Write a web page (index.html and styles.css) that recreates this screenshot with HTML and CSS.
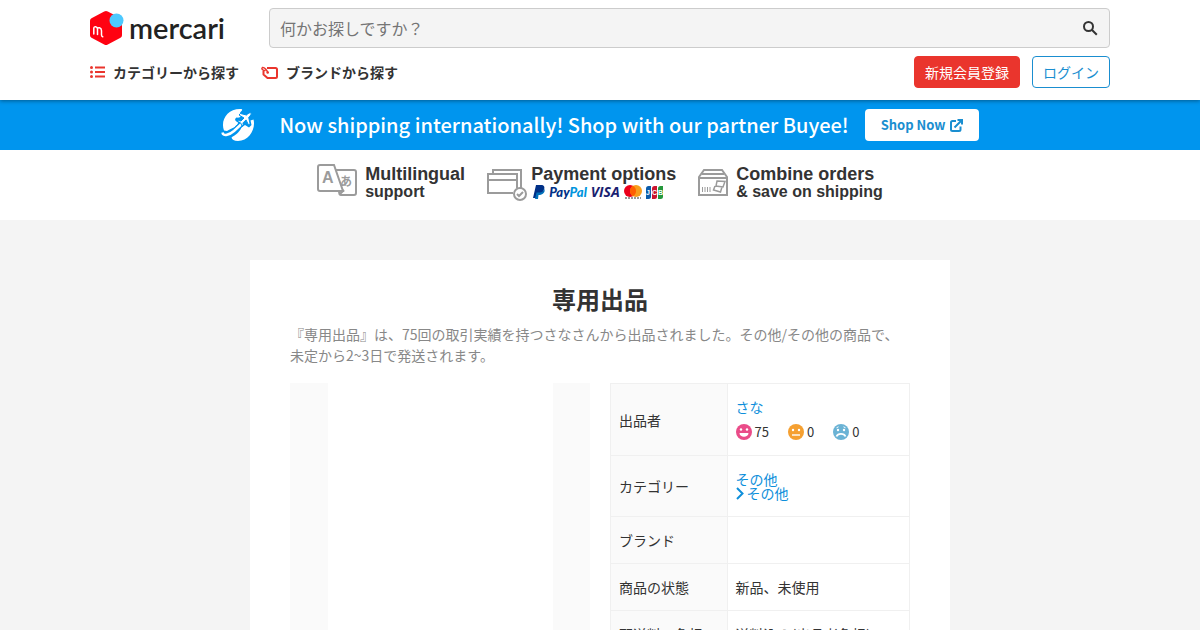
FILE: index.html
```html
<!DOCTYPE html>
<html lang="ja">
<head>
    <meta charset="utf-8">
    <meta name="viewport" content="width=device-width, initial-scale=1">
    <title>専用出品 - メルカリ</title>
    <link rel="stylesheet" href="styles.css">
</head>
<body>
    <header class="header">
        <div class="header-inner">
            <div class="header-top">
                <a href="#" class="logo">
                    <svg width="35" height="34" viewBox="0 0 35 34">
                        <path d="M14.200.5Q16 -.5 17.800.5L30.500 7.200Q32 8 32 9.800V24.200Q32 26 30.500 26.800L17.800 33.500Q16 34.500 14.200 33.500L1.500 26.800Q0 26 0 24.200V9.800Q0 8 1.500 7.200Z" fill="#ff0211"/>
                        <circle cx="26.500" cy="9.500" r="7" fill="#4dc9ff"/>
                        <path d="M3.800 23v-5.500c0-2.800 3.700-2.200 3.700.8v5.200M7.500 18.300c0-2.800 4-1.800 4 1.400v4.200c0 1 .3 1.500 1.200 1.800" fill="none" stroke="#fff" stroke-width="1.500" stroke-linecap="round"/>
                    </svg>
                    <span class="logo-name">mercari</span>
                </a>
                <form class="search" action="#">
                    <input type="search" name="keyword" class="search-input" aria-label="キーワード" placeholder="何かお探しですか？">
                    <button type="submit" class="search-button" aria-label="検索">
                        <svg width="16" height="16" viewBox="0 0 16 16" fill="none" stroke="#333" stroke-width="2">
                            <circle cx="6.500" cy="6.500" r="4.500"/>
                            <path d="M9.800 9.800l5 5"/>
                        </svg>
                    </button>
                </form>
            </div>
            <div class="header-bottom">
                <nav class="nav">
                    <a href="#" class="nav-link nav-category">
                        <svg width="15" height="12" viewBox="0 0 15 12" fill="#ea352d">
                            <circle cx="1.500" cy="1.500" r="1.500"/>
                            <circle cx="1.500" cy="6" r="1.500"/>
                            <circle cx="1.500" cy="10.500" r="1.500"/>
                            <path d="M5 .5h10v2H5zM5 5h10v2H5zM5 9.500h10v2H5z"/>
                        </svg>
                        カテゴリーから探す
                    </a>
                    <a href="#" class="nav-link">
                        <svg width="17" height="13" viewBox="0 0 17 13" fill="none" stroke="#ea352d" stroke-width="2" stroke-linejoin="round">
                            <path d="M6 2H14.500Q16 2 16 3.500V10.500Q16 12 14.500 12H6.500L2.500 8.500V5"/>
                            <path d="M7 7C6 4 3.500 1.200 1.500 1.500C0 2.500 1.500 4.500 4.500 4.600" stroke-width="1.500"/>
                            <circle cx="6.700" cy="6.500" r="1.300" fill="#ea352d" stroke="none"/>
                        </svg>
                        ブランドから探す
                    </a>
                </nav>
                <div class="user-buttons">
                    <a href="#" class="btn btn-red">新規会員登録</a>
                    <a href="#" class="btn btn-outline">ログイン</a>
                </div>
            </div>
        </div>
    </header>

    <section class="banner">
        <svg width="34" height="34" viewBox="0 0 34 34">
            <path d="M3 22.500C-1 12 7 0 21 1.200C22 3 18 4 19 6.500C21 9 18 10 15.500 9.500C13 11 14 13 17 14.500C17 17 15 17 14 19C11 20 8 22 6 23Z" fill="#fff"/>
            <path d="M10.500 29.500C14 27 18 25 20.500 19.500L24 17L28 19.500L30.500 17L29.500 12.500L32.500 11.500C35 21 28 33 17 33C13 33 11 31.500 10.500 29.500Z" fill="#fff"/>
            <path d="M1.500 24.500C3 29 9 26.500 13 23L20.500 16" fill="none" stroke="#0095ee" stroke-width="5"/>
            <path d="M1.500 24.500C2 29 9 26.500 13 23L20.500 16" fill="none" stroke="#fff" stroke-width="2.500"/>
            <path d="M30 5c-1-1-3 .5-4.500 2l-6-1.500-1.500 1.500 5 3-3 3-2.200-.4-1 1 3 1.500 1.200 3 1.200-1-.2-2.200 3-3 2.500 5 1.500-1.500-1.300-6c1.500-1.500 3.300-3.400 2.300-4.400z" fill="#fff" stroke="#0095ee"/>
        </svg>
        <p class="banner-text">Now shipping internationally! Shop with our partner Buyee!</p>
        <a href="#" class="banner-button">Shop Now
            <svg width="13" height="13" viewBox="0 0 13 13" fill="none" stroke="#1a8ed0" stroke-width="2">
                <path d="M6 2H2.500Q1 2 1 3.500V10.500Q1 12 2.500 12H9Q10.500 12 10.500 10.500V7.500"/>
                <path d="M4.500 8.500L11 2M7.500 1H12V5.500"/>
            </svg>
        </a>
    </section>

    <section class="features">
        <div class="feature">
            <svg width="40" height="32" viewBox="0 0 40 32" fill="none" stroke="#9b9b9b" stroke-width="2">
                <path d="M3 1H17L26 27H3Q1 27 1 25V3Q1 1 3 1Z"/>
                <path d="M19 6H37Q39 6 39 8V29Q39 31 37 31H24Q22 31 22 27M22 31L27 26"/>
                <text x="5" y="19" class="icon-letter">A</text>
                <text x="23" y="22" class="icon-kana">あ</text>
            </svg>
            <div>
                <h2>Multilingual</h2>
                <p>support</p>
            </div>
        </div>
        <div class="feature">
            <svg width="40" height="32" viewBox="0 0 40 32" fill="none" stroke="#9b9b9b" stroke-width="2">
                <path d="M6 5V1H34V19"/>
                <path d="M26 24H1V5H30V19M1 11H30"/>
                <circle cx="33" cy="25" r="6"/>
                <path d="M30 25l2 2 4-4"/>
            </svg>
            <div>
                <h2>Payment options</h2>
                <div class="payments">
                    <svg width="12" height="14" viewBox="0 0 12 14">
                        <path d="M3 0h5c3 0 4 2 3 4.500C10 8 8 8.500 5 8.500L4 13H0z" fill="#003087"/>
                        <path d="M11 3.500c2 3-1 6.500-5.500 6.500L5 14H2l1.500-6.500H7c2 0 3.500-1 4-4z" fill="#0070ba"/>
                    </svg>
                    <span class="paypal">Pay<b>Pal</b></span>
                    <span class="visa">VISA</span>
                    <svg width="18" height="14" viewBox="0 0 18 14">
                        <circle cx="6" cy="6" r="6" fill="#eb001b"/>
                        <circle cx="12" cy="6" r="6" fill="#f79e1b"/>
                        <path d="M9 .8a6 6 0 0 1 0 10.400a6 6 0 0 1 0-10.400" fill="#ff5f00"/>
                        <path d="M1 13h16" stroke="#333" stroke-dasharray="2 1"/>
                    </svg>
                    <svg width="17" height="13" viewBox="0 0 17 13">
                        <path d="M2.500 0H5V10.500Q5 13 2.500 13H0V2.500Q0 0 2.500 0" fill="#0b5cab"/>
                        <path d="M8.500 0H11V10.500Q11 13 8.500 13H6V2.500Q6 0 8.500 0" fill="#c9152f"/>
                        <path d="M14.500 0H17V10.500Q17 13 14.500 13H12V2.500Q12 0 14.500 0" fill="#24973b"/>
                        <text x="0" y="9" class="jcb">J</text>
                        <text x="6" y="9" class="jcb">C</text>
                        <text x="12" y="9" class="jcb">B</text>
                    </svg>
                </div>
            </div>
        </div>
        <div class="feature">
            <svg width="30" height="27" viewBox="0 0 30 27" fill="none" stroke="#9b9b9b" stroke-width="2">
                <path d="M1 8V26H29V8L24 1H6ZM1 9H29M4 5H26"/>
                <path d="M4.500 18v5M7 18v5M9.500 18v5M12 18v5" stroke-width="1"/>
                <path d="M19 12L27 12.500L25 18L18 17ZM17 17l-1.500 4 7 2 1.500-5" stroke-width="1.500"/>
            </svg>
            <div>
                <h2>Combine orders</h2>
                <p>&amp; save on shipping</p>
            </div>
        </div>
    </section>

    <main class="main">
        <article class="item-box">
            <h1 class="item-name">専用出品</h1>
            <p class="item-lead">『専用出品』は、75回の取引実績を持つさなさんから出品されました。その他/その他の商品で、未定から2~3日で発送されます。</p>
            <div class="item-content">
                <div class="item-photo">
                    <div class="photo"></div>
                </div>
                <table class="item-table">
                    <tr>
                        <th>出品者</th>
                        <td>
                            <a href="#">さな</a>
                            <div class="ratings">
                                <span class="rating">
                                    <svg width="16" height="16" viewBox="0 0 16 16">
                                        <circle cx="8" cy="8" r="8" fill="#ea4c89"/>
                                        <circle cx="5" cy="5.500" r="1.200" fill="#fff"/>
                                        <circle cx="11" cy="5.500" r="1.200" fill="#fff"/>
                                        <path d="M3.500 9h9c0 5-9 5-9 0z" fill="#fff"/>
                                    </svg>
                                    75
                                </span>
                                <span class="rating">
                                    <svg width="16" height="16" viewBox="0 0 16 16">
                                        <circle cx="8" cy="8" r="8" fill="#f5a031"/>
                                        <circle cx="5" cy="6" r="1.200" fill="#fff"/>
                                        <circle cx="11" cy="6" r="1.200" fill="#fff"/>
                                        <path d="M4 10.300h8v1.400H4z" fill="#fff"/>
                                    </svg>
                                    0
                                </span>
                                <span class="rating">
                                    <svg width="16" height="16" viewBox="0 0 16 16">
                                        <circle cx="8" cy="8" r="8" fill="#6bb3d5"/>
                                        <circle cx="5" cy="6" r="1.200" fill="#fff"/>
                                        <circle cx="11" cy="6" r="1.200" fill="#fff"/>
                                        <path d="M3.500 12.500c1.500-3.500 7.500-3.500 9 0" fill="none" stroke="#fff" stroke-width="1.800"/>
                                        <path d="M3.500 3.800l2-1M12.500 3.800l-2-1" stroke="#fff"/>
                                    </svg>
                                    0
                                </span>
                            </div>
                        </td>
                    </tr>
                    <tr>
                        <th>カテゴリー</th>
                        <td>
                            <a href="#" class="category">その他</a>
                            <a href="#" class="category">
                                <svg width="8" height="13" viewBox="0 0 8 13" fill="none" stroke="#0e8fdb" stroke-width="2">
                                    <path d="M1 1l5.500 5.500L1 12"/>
                                </svg>
                                その他
                            </a>
                        </td>
                    </tr>
                    <tr>
                        <th>ブランド</th>
                        <td></td>
                    </tr>
                    <tr>
                        <th>商品の状態</th>
                        <td>新品、未使用</td>
                    </tr>
                    <tr>
                        <th>配送料の負担</th>
                        <td>送料込み(出品者負担)</td>
                    </tr>
                </table>
            </div>
        </article>
    </main>
</body>
</html>
```
FILE: styles.css
```css
* {
    box-sizing: border-box;
}
body {
    margin: 0;
    background: #f4f4f4;
    color: #333;
    font-family: "Noto Sans CJK JP", sans-serif;
    font-size: 14px;
    line-height: 20px;
}
h1, h2, p {
    margin: 0;
}
a {
    color: #0e8fdb;
    text-decoration: none;
}
svg {
    display: block;
    flex-shrink: 0;
}

/* header */
.header {
    position: relative;
    background: #fff;
    box-shadow: 0 1px 4px rgba(0, 0, 0, 0.4);
}
.header-inner {
    max-width: 1020px;
    margin: 0 auto;
    padding: 8px 0 12px;
}
.header-top {
    display: flex;
    align-items: center;
    gap: 44px;
}
.logo {
    display: flex;
    align-items: center;
    gap: 4px;
    color: #222;
}
.logo-name {
    width: 96px;
    font-family: Lato, sans-serif;
    font-size: 29px;
    font-weight: 600;
    line-height: 34px;
}
.search {
    display: flex;
    flex: 1;
    height: 40px;
    background: #f4f4f4;
    border: 1px solid #ccc;
    border-radius: 4px;
}
.search-input {
    flex: 1;
    padding: 0 10px;
    border: none;
    outline: none;
    background: transparent;
    font-family: inherit;
    font-size: 16px;
}
.search-input::placeholder {
    color: #757575;
}
.search-button {
    padding: 0 11px;
    border: none;
    background: transparent;
    cursor: pointer;
}
.header-bottom {
    display: flex;
    justify-content: space-between;
    margin-top: 8px;
}
.nav {
    display: flex;
    align-items: center;
    gap: 22px;
}
.nav-link {
    display: flex;
    align-items: center;
    gap: 8px;
    color: #333;
    font-weight: bold;
}
.user-buttons {
    display: flex;
    gap: 12px;
}
.btn {
    padding: 5px 10px;
    border: 1px solid #ea352d;
    border-radius: 4px;
}
.btn-red {
    background: #ea352d;
    color: #fff;
}
.btn-outline {
    border-color: #1a8ed0;
    color: #1a8ed0;
}

/* overseas banner */
.banner {
    display: flex;
    align-items: center;
    justify-content: center;
    height: 50px;
    background: #0095ee;
}
.banner-text {
    margin: 0 16px 0 24px;
    color: #fff;
    font-size: 20px;
    font-weight: 500;
    line-height: 32px;
}
.banner-button {
    display: flex;
    align-items: center;
    gap: 4px;
    height: 32px;
    padding: 0 16px;
    border-radius: 4px;
    background: #fff;
    color: #1a8ed0;
    font-size: 13px;
    font-weight: bold;
}
.features {
    display: flex;
    justify-content: center;
    gap: 22px;
    height: 70px;
    padding-top: 14px;
    background: #fff;
}
.feature {
    display: flex;
    gap: 8px;
    font-family: "Liberation Sans", Arial, sans-serif;
}
.feature:nth-child(2) {
    gap: 4px;
}
.feature:nth-child(2) > svg,
.feature:nth-child(3) > svg {
    margin-top: 5px;
}
.feature h2 {
    font-size: 18px;
    line-height: 20px;
}
.feature p {
    font-size: 16px;
    font-weight: bold;
    line-height: 16px;
}
.icon-letter, .icon-kana {
    fill: #9b9b9b;
    stroke: none;
    font-size: 16px;
    font-weight: bold;
}
.icon-kana {
    font-family: "Noto Sans CJK JP", sans-serif;
    font-size: 12px;
}
.payments {
    display: flex;
    align-items: center;
    gap: 4px;
    height: 16px;
    padding-left: 2px;
    font-style: italic;
    font-weight: bold;
}
.paypal {
    color: #003087;
    font-family: Lato, sans-serif;
    font-size: 13px;
    font-weight: 900;
}
.paypal b {
    color: #0095dd;
}
.visa {
    color: #1a1f71;
    font-family: "Open Sans", sans-serif;
    font-size: 14px;
}
.jcb {
    fill: #fff;
    font-size: 7px;
    font-style: normal;
}

/* item */
.main {
    padding: 40px 0;
}
.item-box {
    max-width: 700px;
    margin: 0 auto;
    padding: 22px 40px 40px;
    background: #fff;
}
.item-name {
    font-size: 24px;
    line-height: 34px;
    text-align: center;
}
.item-lead {
    margin-top: 8px;
    color: #888;
    line-height: 21px;
}
.item-content {
    display: grid;
    grid-template-columns: 1fr 1fr;
    align-items: start;
    gap: 20px;
    margin-top: 17px;
}
.item-photo {
    display: flex;
    justify-content: center;
    background: #fafafa;
}
.photo {
    width: 75%;
    min-height: 300px;
    background: #fff;
}
.item-table {
    width: 100%;
    border-collapse: collapse;
}
.item-table th, .item-table td {
    padding: 13px 8px;
    border: 1px solid #f0f0f0;
    text-align: left;
}
.item-table th {
    width: 39%;
    background: #fafafa;
    font-weight: normal;
}
.ratings {
    display: flex;
    gap: 19px;
    margin-top: 5px;
}
.rating {
    display: flex;
    align-items: center;
    gap: 3px;
    font-size: 13px;
}
.category {
    display: flex;
    align-items: center;
    gap: 3px;
    line-height: 14px;
}
.item-table td:has(.category) {
    padding: 16px 8px;
}
```
